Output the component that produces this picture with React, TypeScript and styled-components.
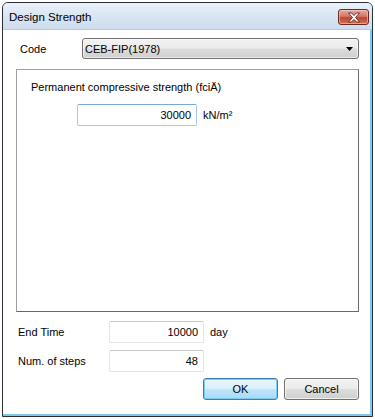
import React from "react";
import styled, { createGlobalStyle } from "styled-components";

const Global = createGlobalStyle`
  html, body { margin: 0; padding: 0; background: #ffffff; }
  body { font-family: "Segoe UI", "Liberation Sans", Arial, sans-serif; font-size: 11px; color: #000; }
  * { box-sizing: border-box; }
`;

const Window = styled.div`
  margin: 2px 0 0 2px;
  width: 371px;
  height: 415px;
  border: 1px solid #2a2f36;
  border-radius: 6px 6px 0 0;
  display: flex;
  flex-direction: column;
  overflow: hidden;
  background: #c9dbef;
`;

const TitleBar = styled.div`
  height: 27px;
  flex: none;
  display: flex;
  align-items: center;
  justify-content: space-between;
  padding: 0 3px 0 6px;
  background: linear-gradient(to bottom, #eaf1f9 0%, #dbe6f3 45%, #cddcee 100%);
  border-bottom: 1px solid #b4c8df;
`;

const Title = styled.span`
  font-size: 11.5px;
  color: #000;
  margin-top: 1px;
`;

const CloseButton = styled.div`
  width: 31px;
  height: 16px;
  margin-top: 2px;
  border: 1px solid #6a2a22;
  border-radius: 3px;
  background: linear-gradient(to bottom, #e6a99c 0%, #d47866 45%, #c24631 55%, #d0705a 100%);
  display: flex;
  align-items: center;
  justify-content: center;
  box-shadow: inset 0 0 0 1px rgba(255, 220, 210, 0.5);
`;

const Client = styled.div`
  flex: 1;
  display: flex;
  flex-direction: column;
  background: #ffffff;
  border-right: 2px solid #7dc9ee;
  border-bottom: 2px solid #7dc9ee;
  padding: 8px 11px 0 13px;
`;

const CodeRow = styled.div`
  display: flex;
  align-items: center;
  height: 21px;
  padding-left: 4px;
`;

const Label = styled.span<{ $w?: number }>`
  width: ${(p) => (p.$w ? `${p.$w}px` : "auto")};
  flex: none;
  font-size: 11px;
  white-space: nowrap;
`;

const Combo = styled.div`
  flex: 1;
  height: 21px;
  border: 1px solid #707070;
  border-radius: 3px;
  background: linear-gradient(to bottom, #f2f2f2 0%, #ebebeb 48%, #dddddd 52%, #cfcfcf 100%);
  box-shadow: inset 0 0 0 1px rgba(255, 255, 255, 0.6);
  display: flex;
  align-items: center;
  justify-content: space-between;
  padding: 0 5px 0 2px;
  font-size: 11px;
`;

const Panel = styled.div`
  margin-top: 10px;
  width: 343px;
  height: 243px;
  border-top: 1px solid #a0a0a0;
  border-left: 1px solid #a0a0a0;
  border-right: 1px solid #696969;
  border-bottom: 1px solid #696969;
  padding: 9px 0 0 14px;
  display: flex;
  flex-direction: column;
`;

const PanelLabel = styled.div`
  font-size: 11px;
  height: 16px;
  line-height: 16px;
`;

const InputRow = styled.div<{ $indent?: number; $top?: number }>`
  display: flex;
  align-items: center;
  gap: 6px;
  padding-left: ${(p) => p.$indent ?? 0}px;
  margin-top: ${(p) => p.$top ?? 0}px;
`;

const TextBox = styled.div<{ $w: number; $focus?: boolean }>`
  width: ${(p) => p.$w}px;
  height: 22px;
  flex: none;
  border: 1px solid ${(p) => (p.$focus ? "#a9c9e8" : "#e2e3ea")};
  border-top-color: ${(p) => (p.$focus ? "#7ea9d6" : "#c6c8ce")};
  border-radius: 2px;
  background: #fff;
  display: flex;
  align-items: center;
  justify-content: flex-end;
  padding-right: 5px;
  font-size: 11px;
`;

const Unit = styled.span`
  font-size: 11px;
`;

const BottomRows = styled.div`
  margin-top: 9px;
  display: flex;
  flex-direction: column;
  gap: 7px;
  padding-left: 2px;
`;

const ButtonRow = styled.div`
  margin-top: 6px;
  display: flex;
  justify-content: flex-end;
  gap: 6px;
  width: 343px;
`;

const Button = styled.div<{ $default?: boolean }>`
  width: 75px;
  height: 22px;
  border: 1px solid ${(p) => (p.$default ? "#3c7fb1" : "#707070")};
  border-radius: 3px;
  background: linear-gradient(to bottom, ${(p) =>
    p.$default
      ? "#eaf6fd 0%, #d9f0fc 48%, #bee6fd 52%, #a7d9f5 100%"
      : "#f2f2f2 0%, #ebebeb 48%, #dddddd 52%, #cfcfcf 100%"});
  box-shadow: inset 0 0 0 1px ${(p) => (p.$default ? "rgba(120,200,240,0.9)" : "rgba(255,255,255,0.7)")};
  display: flex;
  align-items: center;
  justify-content: center;
  font-size: 11px;
`;

export default function App() {
  return (
    <>
      <Global />
      <Window>
        <TitleBar>
          <Title>Design Strength</Title>
          <CloseButton>
            <svg width="14" height="11" viewBox="0 0 14 11">
              <path
                d="M1.5 1 H4.5 L7 3.5 L9.5 1 H12.5 L8.5 5.5 L12.5 10 H9.5 L7 7.5 L4.5 10 H1.5 L5.5 5.5 Z"
                fill="#ffffff"
                stroke="#5a2620"
                strokeWidth="0.9"
                strokeLinejoin="round"
              />
            </svg>
          </CloseButton>
        </TitleBar>
        <Client>
          <CodeRow>
            <Label $w={62}>Code</Label>
            <Combo>
              <span>CEB-FIP(1978)</span>
              <svg width="7" height="4" viewBox="0 0 7 4">
                <path d="M0 0 H7 L3.5 4 Z" fill="#000" />
              </svg>
            </Combo>
          </CodeRow>
          <Panel>
            <PanelLabel>Permanent compressive strength (fciÄ)</PanelLabel>
            <InputRow $indent={46} $top={9}>
              <TextBox $w={120} $focus>30000</TextBox>
              <Unit>kN/m²</Unit>
            </InputRow>
          </Panel>
          <BottomRows>
            <InputRow>
              <Label $w={85}>End Time</Label>
              <TextBox $w={95}>10000</TextBox>
              <Unit>day</Unit>
            </InputRow>
            <InputRow>
              <Label $w={85}>Num. of steps</Label>
              <TextBox $w={95}>48</TextBox>
            </InputRow>
          </BottomRows>
          <ButtonRow>
            <Button $default>OK</Button>
            <Button>Cancel</Button>
          </ButtonRow>
        </Client>
      </Window>
    </>
  );
}
